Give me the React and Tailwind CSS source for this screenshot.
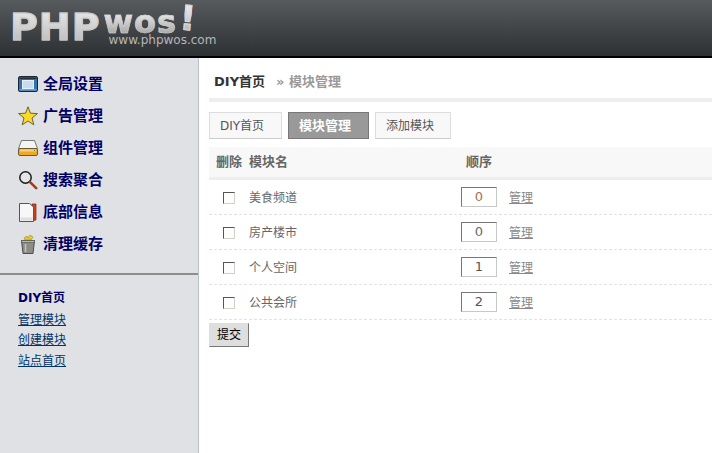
const cjk = "font-['DejaVu_Sans','Noto_Sans_CJK_SC',sans-serif]";

function ScreenIcon() {
  return (
    <svg width="20" height="18" viewBox="0 0 20 18">
      <rect x="0.5" y="1.5" width="19" height="15" rx="1.5" fill="#3273ad" stroke="#1c2733" />
      <rect x="1.5" y="2.5" width="17" height="1.6" fill="#22303c" />
      <rect x="4.5" y="5.5" width="11" height="8" fill="#c9dcee" stroke="#e8f0f8" />
      <rect x="1.5" y="14" width="17" height="1.5" fill="#6fa3d2" />
    </svg>
  );
}

function StarIcon() {
  return (
    <svg width="20" height="20" viewBox="0 0 20 20">
      <path d="M10 .8l2.4 6.4 7 .4-5.4 4.4 1.8 6.8L10 15l-5.8 3.8 1.8-6.8L.6 7.6l7-.4z" fill="#fbd92c" stroke="#4a4420" strokeWidth="0.8" />
    </svg>
  );
}

function DriveIcon() {
  return (
    <svg width="20" height="18" viewBox="0 0 20 18">
      <path d="M3.5 1.5h13l3 8h-19z" fill="#f4f4f2" stroke="#77766f" />
      <rect x="0.5" y="9.5" width="19" height="7" rx="1.5" fill="#f5a623" stroke="#6b5a35" />
      <rect x="2" y="10.5" width="16" height="2" fill="#fcd27a" />
      <rect x="16" y="11" width="1" height="1" fill="#2f8f2f" />
    </svg>
  );
}

function SearchIcon() {
  return (
    <svg width="20" height="20" viewBox="0 0 20 20">
      <circle cx="7.5" cy="7.5" r="5.7" fill="#e4e5e8" stroke="#1c1c1c" strokeWidth="1.5" />
      <path d="M11.8 11.8l6.4 6.4" stroke="#a33b1c" strokeWidth="2.6" strokeLinecap="round" />
    </svg>
  );
}

function PageIcon() {
  return (
    <svg width="20" height="21" viewBox="0 0 20 21">
      <path d="M14 2h4v16l-4 1z" fill="#cf3f1c" stroke="#7c2a16" strokeWidth="0.7" />
      <path d="M1.5 1.5h10l4 3.5v14.5h-14z" fill="#f7f7f7" stroke="#55555a" />
      <path d="M2.5 15.5h12v3h-12z" fill="#dddddd" />
    </svg>
  );
}

function TrashIcon() {
  return (
    <svg width="20" height="21" viewBox="0 0 20 21">
      <path d="M6 4l3-2 1 2 2-3 3 2-2 3H7z" fill="#e6c92c" stroke="#8a7a20" strokeWidth="0.5" />
      <path d="M3.5 6.5h13l-1.5 13h-10z" fill="#8d8d88" stroke="#4e4e4a" />
      <path d="M3.5 6.5h13v2h-13z" fill="#b8b8b2" stroke="#4e4e4a" strokeWidth="0.6" />
      <path d="M7.5 10v8" stroke="#c6c6c0" strokeWidth="1.4" />
    </svg>
  );
}

const navItems = [
  { label: "全局设置", Icon: ScreenIcon },
  { label: "广告管理", Icon: StarIcon },
  { label: "组件管理", Icon: DriveIcon },
  { label: "搜索聚合", Icon: SearchIcon },
  { label: "底部信息", Icon: PageIcon },
  { label: "清理缓存", Icon: TrashIcon },
];

const modules = [
  { name: "美食频道", order: 0, tone: "text-[#a5714f]" },
  { name: "房产楼市", order: 0, tone: "text-[#6b6b6b]" },
  { name: "个人空间", order: 1, tone: "text-[#555555]" },
  { name: "公共会所", order: 2, tone: "text-[#555555]" },
];

function Logo() {
  return (
    <div className="flex items-start pl-[10px] font-['DejaVu_Sans',sans-serif] font-bold">
      <span className="mt-[4px] bg-gradient-to-b from-[#efefef] to-[#b4b4b4] bg-clip-text text-[38px] leading-[46px] tracking-[1px] text-transparent [-webkit-text-stroke:1px_#c8c8c8]">
        PHP
      </span>
      <div className="ml-[3px] flex flex-col">
        <div className="mt-[10px] flex items-start">
          <span className="bg-gradient-to-b from-[#f2f2f2] to-[#a8a8a8] bg-clip-text text-[32px] leading-[24px] tracking-[1px] text-transparent [-webkit-text-stroke:0.6px_#d0d0d0]">
            wos
          </span>
          <span className="mb-[-2px] ml-[1px] mt-[-10px] rotate-[5deg] bg-gradient-to-b from-[#f4f4f4] to-[#b0b0b0] bg-clip-text px-[2px] text-[34px] leading-[36px] text-transparent [-webkit-text-stroke:1px_#d8d8d8]">
            !
          </span>
        </div>
        <span className="ml-[5px] text-[12px] font-normal leading-[12px] text-[#b4b6b8]">www.phpwos.com</span>
      </div>
    </div>
  );
}

function Sidebar() {
  return (
    <aside className="flex w-[199px] shrink-0 flex-col border-r border-[#b8c0c8] bg-[#e0e1e4]">
      <ul className="flex flex-col pt-[10px]">
        {navItems.map(({ label, Icon }) => (
          <li key={label} className="flex h-[32px] items-center pl-[18px]">
            <span className="flex w-[24px] justify-start">
              <Icon />
            </span>
            <span className="ml-[1px] text-[15px] font-bold text-[#000066]">{label}</span>
          </li>
        ))}
      </ul>
      <div className="mt-[13px] h-[2px] bg-[#8f8d88]" />
      <div className="flex flex-col pl-[18px] pt-[13px] text-[12px] leading-[20.5px]">
        <span className="font-bold text-[#000066]">DIY首页</span>
        <a className="mt-[1px] text-[#003366] underline" href="#">管理模块</a>
        <a className="text-[#003366] underline" href="#">创建模块</a>
        <a className="text-[#003366] underline" href="#">站点首页</a>
      </div>
    </aside>
  );
}

function Main() {
  return (
    <main className="flex min-w-0 flex-1 flex-col pl-[10px] text-[12px]">
      <div className="flex h-[44px] items-center border-b-[4px] border-[#eeeeee] pl-[5px] pt-[8px] text-[13px] font-bold">
        <span className="text-[#333333]">DIY首页</span>
        <span className="ml-[11px] text-[#999999]">» 模块管理</span>
      </div>
      <div className="mt-[10px] flex gap-[6px]">
        <span className="flex h-[27px] w-[73px] items-center border border-[#dddddd] border-b-[#cccccc] bg-[#f8f8f8] pl-[10px] text-[#555555]">
          DIY首页
        </span>
        <span className="flex h-[27px] w-[81px] items-center border border-[#777777] bg-[#999999] pl-[10px] text-[13px] font-bold text-white">
          模块管理
        </span>
        <span className="flex h-[27px] w-[76px] items-center border border-[#dddddd] border-b-[#cccccc] bg-[#f8f8f8] pl-[10px] text-[#555555]">
          添加模块
        </span>
      </div>
      <div className="mt-[8px] flex h-[33px] items-center border-b-[3px] border-[#eeeeee] bg-[#f8f8f8] pb-[1px] text-[13px] font-bold text-[#666666]">
        <span className="ml-[7px] w-[33px]">删除</span>
        <span className="w-[217px]">模块名</span>
        <span>顺序</span>
      </div>
      {modules.map((m) => (
        <div key={m.name} className="flex h-[35px] items-center border-b border-dashed border-[#e3e3e3] text-[#666666]">
          <span className="ml-[14px] mt-[2px] h-[12px] w-[12px] border border-[#d4d0c8] border-l-[#555555] border-t-[#555555] bg-[#fdfdfd]" />
          <span className="ml-[14px] mt-[1px] w-[212px]">{m.name}</span>
          <span className={`flex h-[20px] w-[36px] items-center justify-center border border-[#c8c8c8] border-l-[#777777] border-t-[#777777] text-[13px] ${m.tone}`}>
            {m.order}
          </span>
          <a className="ml-[12px] mt-[1px] text-[#888888] underline" href="#">管理</a>
        </div>
      ))}
      <button className="mt-[3px] h-[24px] w-[40px] border border-[#dddddd] border-b-[#777777] border-r-[#777777] bg-[#dedede] text-[12px] text-black">
        提交
      </button>
    </main>
  );
}

export default function App() {
  return (
    <div className={`flex h-[453px] w-[712px] flex-col overflow-hidden bg-white ${cjk}`}>
      <header className="h-[58px] shrink-0 border-b-2 border-black bg-gradient-to-b from-[#585b5e] to-[#2e3134]">
        <Logo />
      </header>
      <div className="flex min-h-0 flex-1">
        <Sidebar />
        <Main />
      </div>
    </div>
  );
}
